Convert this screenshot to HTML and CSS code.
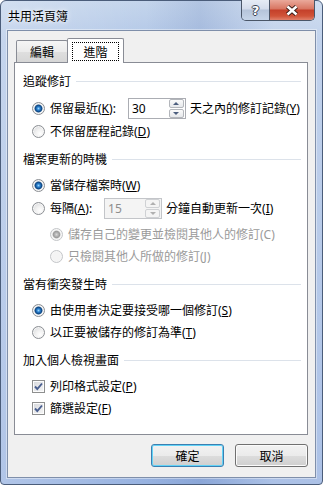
FILE: index.html
```html
<!DOCTYPE html>
<html lang="zh-Hant">
<head>
    <meta charset="UTF-8">
    <title>共用活頁簿</title>
    <link rel="stylesheet" href="styles.css">
</head>
<body>
    <div class="window">
        <div class="titlebar">
            <span class="title">共用活頁簿</span>
            <div class="caption">
                <div class="cap-btn help"><span>?</span></div>
                <div class="cap-btn close">
                    <svg width="14" height="11" viewBox="0 0 14 11">
                        <path d="M2.5 1.5 L11.5 9.5 M11.5 1.5 L2.5 9.5" stroke="#3a1d18" stroke-width="4.4" fill="none"/>
                        <path d="M2.5 1.5 L11.5 9.5 M11.5 1.5 L2.5 9.5" stroke="#ffffff" stroke-width="2.4" fill="none"/>
                    </svg>
                </div>
            </div>
        </div>

        <div class="client">
            <div class="tabs">
                <div class="tab">編輯</div>
                <div class="tab active"><span class="focus">進階</span></div>
            </div>

            <div class="panel">
                <div class="group first">
                    <div class="group-title">追蹤修訂</div>
                    <div class="option spin-row">
                        <span class="radio checked"></span>
                        <span>保留最近(<u>K</u>):</span>
                        <div class="spinner">
                            <span class="value">30</span>
                            <div class="spin-btns">
                                <span class="spin-btn up"></span>
                                <span class="spin-btn down"></span>
                            </div>
                        </div>
                        <span>天之內的修訂記錄(<u>Y</u>)</span>
                    </div>
                    <div class="option">
                        <span class="radio"></span>
                        <span>不保留歷程記錄(<u>D</u>)</span>
                    </div>
                </div>

                <div class="group">
                    <div class="group-title">檔案更新的時機</div>
                    <div class="option">
                        <span class="radio checked"></span>
                        <span>當儲存檔案時(<u>W</u>)</span>
                    </div>
                    <div class="option spin-row">
                        <span class="radio"></span>
                        <span>每隔(<u>A</u>):</span>
                        <div class="spinner disabled">
                            <span class="value">15</span>
                            <div class="spin-btns">
                                <span class="spin-btn up"></span>
                                <span class="spin-btn down"></span>
                            </div>
                        </div>
                        <span>分鐘自動更新一次(<u>I</u>)</span>
                    </div>
                    <div class="sub">
                        <div class="option disabled">
                            <span class="radio checked"></span>
                            <span>儲存自己的變更並檢閱其他人的修訂(C)</span>
                        </div>
                        <div class="option disabled">
                            <span class="radio"></span>
                            <span>只檢閱其他人所做的修訂(J)</span>
                        </div>
                    </div>
                </div>

                <div class="group">
                    <div class="group-title">當有衝突發生時</div>
                    <div class="option">
                        <span class="radio checked"></span>
                        <span>由使用者決定要接受哪一個修訂(<u>S</u>)</span>
                    </div>
                    <div class="option">
                        <span class="radio"></span>
                        <span>以正要被儲存的修訂為準(<u>T</u>)</span>
                    </div>
                </div>

                <div class="group">
                    <div class="group-title">加入個人檢視畫面</div>
                    <div class="option">
                        <span class="checkbox">
                            <svg width="11" height="11" viewBox="0 0 11 11"><path d="M2 5.5 L4.3 8 L9 2.5" stroke="#4a5f8f" stroke-width="1.9" fill="none"/></svg>
                        </span>
                        <span>列印格式設定(<u>P</u>)</span>
                    </div>
                    <div class="option">
                        <span class="checkbox">
                            <svg width="11" height="11" viewBox="0 0 11 11"><path d="M2 5.5 L4.3 8 L9 2.5" stroke="#4a5f8f" stroke-width="1.9" fill="none"/></svg>
                        </span>
                        <span>篩選設定(<u>F</u>)</span>
                    </div>
                </div>
            </div>

            <div class="buttons">
                <button class="btn default">確定</button>
                <button class="btn">取消</button>
            </div>
        </div>
    </div>
</body>
</html>
```

FILE: styles.css
```css
body {
    margin: 0;
    font-family: "Noto Sans", "Noto Sans CJK TC", sans-serif;
    font-size: 12px;
    color: #000;
}
.window {
    width: 323px;
    height: 485px;
    box-sizing: border-box;
    border: 1px solid #4b5d7a;
    border-radius: 6px 6px 4px 4px;
    background:
        linear-gradient(to right, rgba(255,255,255,0.25), rgba(255,255,255,0) 45%, rgba(50,80,150,0.12) 62%, rgba(255,255,255,0.2) 85%),
        linear-gradient(#c4d5ec, #b2c7e7 40px, #97b2e0);
    display: flex;
    flex-direction: column;
}
.titlebar {
    height: 29px;
    display: flex;
    align-items: center;
    padding: 0 7px;
}
.title {
    flex: 1;
    text-shadow: 0 0 6px #fff, 0 0 3px rgba(255,255,255,0.8);
}
.caption {
    align-self: flex-start;
    margin-top: -1px;
    display: flex;
    height: 20px;
    border: 1px solid #4a5668;
    border-top: none;
    border-radius: 0 0 5px 5px;
    overflow: hidden;
}
.cap-btn {
    display: flex;
    align-items: center;
    justify-content: center;
}
.help {
    width: 27px;
    border-right: 1px solid #4a5668;
    background: linear-gradient(#e6ecf5, #d4dceb 45%, #b5c4da 50%, #c6d5e9);
}
.help span {
    font-family: "DejaVu Sans", sans-serif;
    font-weight: bold;
    font-size: 13px;
    color: #fff;
    text-shadow: 1px 0 #3a4354, -1px 0 #3a4354, 0 1px #3a4354, 0 -1px #3a4354;
}
.close {
    width: 44px;
    background: linear-gradient(#eaa99b, #d87561 45%, #c4402a 50%, #d05338 80%, #e0806a);
}
.client {
    flex: 1;
    margin: 0 6px 6px;
    border: 1px solid #7f8faa;
    background: #f0f0f0;
    padding: 7px 7px 10px 6px;
    display: flex;
    flex-direction: column;
    box-shadow: 0 0 0 1px rgba(255,255,255,0.4);
}
.tabs {
    display: flex;
    align-items: flex-end;
    height: 24px;
    padding-left: 2px;
    position: relative;
    z-index: 1;
}
.tab {
    height: 22px;
    width: 52px;
    box-sizing: border-box;
    border: 1px solid #898c95;
    border-bottom: none;
    border-radius: 2px 2px 0 0;
    display: flex;
    align-items: center;
    justify-content: center;
    background: linear-gradient(#f5f5f5, #ebebeb 50%, #dfdfdf 50%, #d6d6d6);
}
.tab.active {
    height: 25px;
    width: 57px;
    margin-left: -1px;
    margin-bottom: -1px;
    background: #fff;
    padding-top: 1px;
}
.focus {
    width: 47px;
    height: 19px;
    box-sizing: border-box;
    border: 1px dotted #000;
    display: flex;
    align-items: center;
    justify-content: center;
}
.panel {
    flex: 1;
    border: 1px solid #898c95;
    background: #fff;
    padding: 0 6px 0 8px;
}
.group {
    margin-top: 9px;
}
.group.first {
    margin-top: 10px;
}
.group-title {
    height: 16px;
    display: flex;
    align-items: center;
    margin-bottom: 7px;
}
.group-title::after {
    content: "";
    flex: 1;
    height: 1px;
    margin-left: 5px;
    background: #dce2ea;
}
.option {
    height: 22px;
    display: flex;
    align-items: center;
    padding-left: 9px;
    white-space: nowrap;
}
.option.spin-row {
    height: 24px;
}
.option.disabled {
    color: #9a9a9a;
}
.sub {
    margin-top: 3px;
    padding-left: 18px;
}
.radio {
    flex: none;
    width: 13px;
    height: 13px;
    box-sizing: border-box;
    margin-right: 5px;
    border-radius: 50%;
    border: 1px solid #8c8f94;
    background: radial-gradient(circle at 65% 70%, #ffffff 0, #f1f1f1 40%, #d0d2d5 100%);
    box-shadow: inset 0 0 0 1px #f6f6f6;
}
.radio.checked {
    background:
        radial-gradient(circle at 50% 50%, #9bd6fb 0, #2b82d2 1.6px, #114a86 3.2px, #4c77a4 3.8px, transparent 4.4px),
        radial-gradient(circle at 65% 70%, #ffffff 0, #f1f1f1 40%, #d0d2d5 100%);
}
.disabled .radio {
    border-color: #c4c6c9;
    background: #f4f4f4;
}
.disabled .radio.checked {
    background:
        radial-gradient(circle at 50% 50%, #d8d8d8 0, #b0b0b0 2px, #9c9c9c 3.2px, #c4c4c4 3.8px, transparent 4.4px),
        #f4f4f4;
}
.checkbox {
    flex: none;
    width: 13px;
    height: 13px;
    box-sizing: border-box;
    margin-right: 5px;
    border: 1px solid #8e8f8f;
    background: linear-gradient(135deg, #d6d8dc, #f6f6f6);
    box-shadow: inset 0 0 0 1px #fcfcfc;
    display: flex;
    align-items: center;
    justify-content: center;
}
.spinner {
    width: 58px;
    height: 21px;
    box-sizing: border-box;
    margin: 0 4px 0 12px;
    border: 1px solid #abadb3;
    background: #fff;
    display: flex;
    align-items: center;
    padding-left: 3px;
}
.spinner .value {
    flex: 1;
}
.spin-btns {
    width: 15px;
    height: 19px;
    margin-right: 1px;
    display: flex;
    flex-direction: column;
    gap: 1px;
}
.spin-btn {
    flex: 1;
    border: 1px solid #b3b6bb;
    border-radius: 2px;
    background: linear-gradient(#fbfbfb, #e6e8eb);
    display: flex;
    align-items: center;
    justify-content: center;
}
.spin-btn.up::after {
    content: "";
    border-left: 3px solid transparent;
    border-right: 3px solid transparent;
    border-bottom: 3px solid #4c5e7e;
}
.spin-btn.down::after {
    content: "";
    border-left: 3px solid transparent;
    border-right: 3px solid transparent;
    border-top: 3px solid #4c5e7e;
}
.spinner.disabled {
    border-color: #c3c5c9;
    background: #f4f4f4;
    color: #8d8d8d;
}
.spinner.disabled .spin-btn {
    border-color: #cfd1d4;
    background: #f4f4f4;
}
.spinner.disabled .spin-btn.up::after {
    border-bottom-color: #b0b0b0;
}
.spinner.disabled .spin-btn.down::after {
    border-top-color: #b0b0b0;
}
.buttons {
    display: flex;
    justify-content: flex-end;
    gap: 11px;
    margin-top: 9px;
}
.btn {
    width: 73px;
    height: 23px;
    padding: 0;
    border: 1px solid #707070;
    border-radius: 3px;
    background: linear-gradient(#f2f2f2, #ebebeb 50%, #dddddd 50%, #cfcfcf);
    box-shadow: inset 0 0 0 1px #fbfbfb;
    font: inherit;
    color: #000;
}
.btn.default {
    border-color: #3c7fb1;
    box-shadow: inset 0 0 0 1px #62d3f7;
}
```
